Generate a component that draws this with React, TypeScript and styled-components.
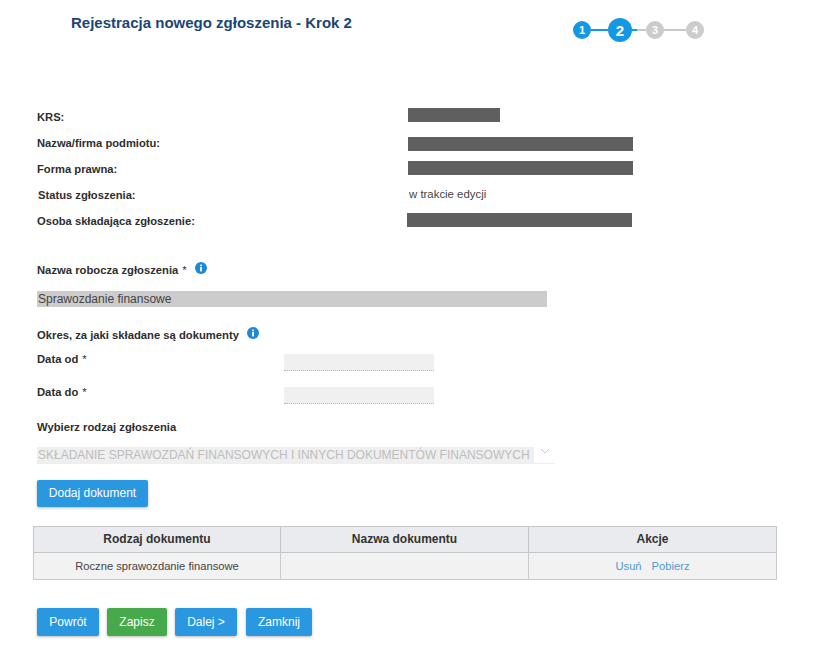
import styled, { createGlobalStyle } from "styled-components";

const GlobalStyle = createGlobalStyle`
  html, body {
    margin: 0;
    padding: 0;
    background: #fff;
  }
  body {
    font-family: "Liberation Sans", Arial, sans-serif;
    font-size: 12px;
    color: #333;
  }
`;

const Page = styled.div`
  width: 814px;
  height: 647px;
  overflow: hidden;
  box-sizing: border-box;
  padding: 0 37px 0 37px;
`;

const Header = styled.header`
  display: flex;
  align-items: flex-start;
  height: 104px;
`;

const Title = styled.h1`
  margin: 14px 0 0 34px;
  width: 502px;
  font-size: 15px;
  line-height: 17px;
  font-weight: 700;
  color: #1b4674;
`;

const Stepper = styled.div`
  display: flex;
  align-items: center;
  height: 24px;
  margin-top: 18px;
`;

const Step = styled.span<{ $done?: boolean; $current?: boolean }>`
  flex: none;
  display: flex;
  align-items: center;
  justify-content: center;
  width: ${(p) => (p.$current ? 24 : 18)}px;
  height: ${(p) => (p.$current ? 24 : 18)}px;
  border-radius: 50%;
  background: ${(p) => (p.$done || p.$current ? "#1598e4" : "#cccccc")};
  color: #fff;
  font-size: ${(p) => (p.$current ? 15 : 11)}px;
  font-weight: 700;
`;

const StepLine = styled.span<{ $w: number; $done?: boolean }>`
  flex: none;
  width: ${(p) => p.$w}px;
  height: 2px;
  background: ${(p) => (p.$done ? "#1598e4" : "#c8c8c8")};
`;

const InfoList = styled.dl`
  margin: 0;
  display: grid;
  grid-template-columns: 371px 1fr;
  grid-auto-rows: 25.8px;
  align-items: center;
`;

const InfoLabel = styled.dt<{ $indent?: number }>`
  padding-left: ${(p) => p.$indent ?? 0}px;
  padding-top: 1px;
  font-weight: 700;
  font-size: 11.2px;
  color: #2e2e2e;
`;

const InfoValue = styled.dd`
  margin: 0;
  font-size: 11.4px;
  color: #444;
  padding-left: 1px;
`;

const Redacted = styled.div<{ $w: number; $shift?: number; $nudge: number }>`
  width: ${(p) => p.$w}px;
  height: 14px;
  margin-left: ${(p) => (p.$shift ?? 0) - 1}px;
  margin-top: ${(p) => p.$nudge * 2}px;
  background: #5f5f5f;
`;

const FieldLabel = styled.label<{ $top: number }>`
  display: flex;
  align-items: center;
  height: 16px;
  margin-top: ${(p) => p.$top}px;
  font-weight: 700;
  font-size: 11.25px;
  color: #2e2e2e;
`;

const Star = styled.span`
  font-weight: 400;
  margin-left: 4px;
`;

const InfoIcon = styled.svg`
  flex: none;
  display: block;
  width: 12px;
  height: 12px;
  margin: -3px 0 0 8px;
`;

const NameInput = styled.div`
  box-sizing: border-box;
  width: 510px;
  height: 16px;
  margin-top: 13px;
  background: #cccccc;
  padding-left: 1px;
  font-size: 12px;
  line-height: 16px;
  color: #444;
`;

const DateRow = styled.div<{ $top: number }>`
  display: flex;
  align-items: center;
  height: 17px;
  margin-top: ${(p) => p.$top}px;
`;

const DateLabel = styled.span`
  width: 247px;
  font-weight: 700;
  font-size: 11.25px;
  color: #2e2e2e;
  margin-top: -7px;
`;

const DateInput = styled.div`
  box-sizing: border-box;
  width: 150px;
  height: 17px;
  background: #f0f0f0;
  border-bottom: 1px dotted #b5b5b5;
`;

const SelectBox = styled.div`
  display: flex;
  box-sizing: border-box;
  width: 518px;
  height: 17px;
  margin-top: 12px;
  border-bottom: 1px solid #eeeeee;
`;

const SelectText = styled.div`
  height: 16px;
  padding: 0 4px 0 1px;
  background: #efefef;
  font-size: 12px;
  line-height: 16px;
  color: #bdbdbd;
  white-space: nowrap;
`;

const Chevron = styled.svg`
  display: block;
  width: 10px;
  height: 6px;
  margin: 1px 0 0 6px;
`;

const Button = styled.button<{ $w: number; $h?: number; $green?: boolean }>`
  display: block;
  box-sizing: border-box;
  width: ${(p) => p.$w}px;
  height: ${(p) => p.$h ?? 28}px;
  padding: 0;
  border: none;
  border-radius: 2px;
  background: ${(p) => (p.$green ? "#46a94c" : "#2a98e0")};
  box-shadow: 0 1px 3px rgba(0, 0, 0, 0.28);
  color: #fff;
  font-family: inherit;
  font-size: 12px;
`;

const AddRow = styled.div`
  margin-top: 16px;
`;

const Table = styled.table`
  width: 744px;
  margin: 19px 0 0 -4px;
  border-collapse: collapse;
  table-layout: fixed;
  background: #f2f2f2;
`;

const Th = styled.th<{ $w?: number }>`
  width: ${(p) => (p.$w ? `${p.$w}px` : "auto")};
  height: 25px;
  padding: 0;
  border: 1px solid #c4c6c9;
  background: #e9ebee;
  font-size: 12px;
  font-weight: 700;
  color: #333;
`;

const Td = styled.td`
  height: 26px;
  padding: 0;
  border: 1px solid #c9cacb;
  text-align: center;
  font-size: 11.2px;
  color: #444;
`;

const ActionLink = styled.a`
  color: #4e9bd0;
  text-decoration: none;
  margin: 0 5px;
`;

const Footer = styled.div`
  display: flex;
  margin-top: 28px;
`;

const FooterButton = styled(Button)<{ $gap: number }>`
  margin-right: ${(p) => p.$gap}px;
`;

function Info() {
  return (
    <InfoIcon viewBox="0 0 12 12">
      <circle cx="6" cy="6" r="6" fill="#1e88dc" />
      <rect x="5.1" y="5" width="1.8" height="4.4" fill="#fff" />
      <rect x="5.1" y="2.6" width="1.8" height="1.6" fill="#fff" />
    </InfoIcon>
  );
}

export default function App() {
  return (
    <Page>
      <GlobalStyle />
      <Header>
        <Title>Rejestracja nowego zgłoszenia - Krok 2</Title>
        <Stepper>
          <Step $done>1</Step>
          <StepLine $w={17} $done />
          <Step $current>2</Step>
          <StepLine $w={5} $done />
          <StepLine $w={9} />
          <Step>3</Step>
          <StepLine $w={22} />
          <Step>4</Step>
        </Stepper>
      </Header>

      <InfoList>
        <InfoLabel>KRS:</InfoLabel>
        <InfoValue>
          <Redacted $w={92} $nudge={-2} />
        </InfoValue>
        <InfoLabel>Nazwa/firma podmiotu:</InfoLabel>
        <InfoValue>
          <Redacted $w={225} $nudge={1} />
        </InfoValue>
        <InfoLabel>Forma prawna:</InfoLabel>
        <InfoValue>
          <Redacted $w={225} $nudge={0} />
        </InfoValue>
        <InfoLabel $indent={1}>Status zgłoszenia:</InfoLabel>
        <InfoValue>w trakcie edycji</InfoValue>
        <InfoLabel>Osoba składająca zgłoszenie:</InfoLabel>
        <InfoValue>
          <Redacted $w={225} $shift={-1} $nudge={0} />
        </InfoValue>
      </InfoList>

      <FieldLabel $top={29}>
        Nazwa robocza zgłoszenia <Star>*</Star>
        <Info />
      </FieldLabel>
      <NameInput>Sprawozdanie finansowe</NameInput>

      <FieldLabel $top={20}>
        Okres, za jaki składane są dokumenty
        <Info />
      </FieldLabel>
      <DateRow $top={11}>
        <DateLabel>
          Data od
          <Star>*</Star>
        </DateLabel>
        <DateInput />
      </DateRow>
      <DateRow $top={16}>
        <DateLabel>
          Data do
          <Star>*</Star>
        </DateLabel>
        <DateInput />
      </DateRow>

      <FieldLabel $top={15}>Wybierz rodzaj zgłoszenia</FieldLabel>
      <SelectBox>
        <SelectText>SKŁADANIE SPRAWOZDAŃ FINANSOWYCH I INNYCH DOKUMENTÓW FINANSOWYCH</SelectText>
        <Chevron viewBox="0 0 10 6">
          <path d="M1 1l4 4 4-4" fill="none" stroke="#c8c8c8" strokeWidth="1" />
        </Chevron>
      </SelectBox>

      <AddRow>
        <Button $w={111} $h={27}>Dodaj dokument</Button>
      </AddRow>

      <Table>
        <thead>
          <tr>
            <Th $w={246}>Rodzaj dokumentu</Th>
            <Th $w={247}>Nazwa dokumentu</Th>
            <Th>Akcje</Th>
          </tr>
        </thead>
        <tbody>
          <tr>
            <Td>Roczne sprawozdanie finansowe</Td>
            <Td />
            <Td>
              <ActionLink href="#">Usuń</ActionLink>
              <ActionLink href="#">Pobierz</ActionLink>
            </Td>
          </tr>
        </tbody>
      </Table>

      <Footer>
        <FooterButton $w={62} $gap={8}>Powrót</FooterButton>
        <FooterButton $w={60} $gap={8} $green>Zapisz</FooterButton>
        <FooterButton $w={62} $gap={9}>Dalej &gt;</FooterButton>
        <FooterButton $w={66} $gap={0}>Zamknij</FooterButton>
      </Footer>
    </Page>
  );
}
